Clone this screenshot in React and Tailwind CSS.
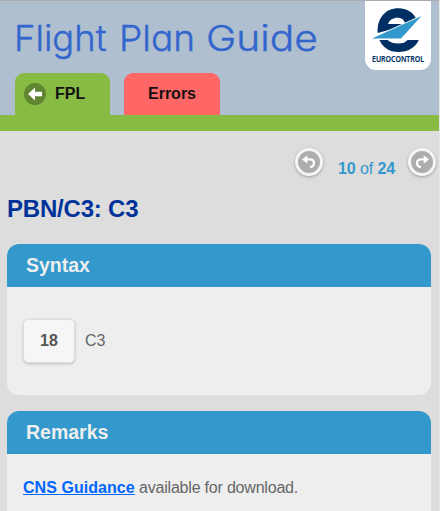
import React from 'react';

function Logo() {
  return (
    <div className="mt-px h-[69px] w-[66px] rounded-b-[11px] bg-white">
      <svg width="66" height="53" viewBox="365 1 66 53">
        <path
          d="M377.700 33C376.800 18.600 385 8.300 398.500 8.300C406.500 8.300 412.500 12 416.300 18.500L405 24C404.500 20 402 17.800 397.500 17.800C393 17.800 389.500 20 388 24H404L400 27Z"
          fill="#002f63"
        />
        <path
          d="M379.500 40L387.600 40C390 42.400 394 43.600 398.500 43.600C402.500 43.600 405.500 42.400 407.600 40L418.800 40C415.500 47.500 408 52 398.500 52C389.500 52 382.500 47.500 379.500 40Z"
          fill="#002f63"
        />
        <path d="M372 38.600L421.500 16L401 38.600Z" fill="#3399cc" stroke="#fff" strokeWidth="1.600" paintOrder="stroke" />
      </svg>
      <div className="origin-center scale-x-[0.87] text-center font-['Open_Sans',sans-serif] text-[8px] leading-[10px] font-semibold whitespace-nowrap text-[#002f63] [-webkit-text-stroke:0.200px_#002f63]">
        EUROCONTROL
      </div>
    </div>
  );
}

function RoundButton({ flip }) {
  return (
    <button className="flex size-[28px] items-center justify-center rounded-full border-[3px] border-[#f5f5f5] bg-[#adadad] shadow-[0_1px_3px_rgba(0,0,0,0.3)]">
      <svg
        width="22"
        height="22"
        viewBox="0 0 22 22"
        className={flip ? 'shrink-0 -scale-x-100' : 'shrink-0'}
      >
        <path d="M7 8.400H12C17 8.400 17.500 15.300 12 16.200" fill="none" stroke="#fff" strokeWidth="2.200" />
        <path d="M4 8.400L9.300 4.300V12.500Z" fill="#fff" />
      </svg>
    </button>
  );
}

function Card({ title, className, children }) {
  return (
    <section className={`overflow-hidden rounded-[12px] bg-[#eee] ${className}`}>
      <h2 className="flex h-[43px] items-center bg-[#3399cc] pl-[19px] text-[19.500px] font-bold text-[#eee]">
        {title}
      </h2>
      {children}
    </section>
  );
}

export default function App() {
  return (
    <main className="h-[511px] w-[440px] overflow-hidden border-r border-[#e6e6e6] bg-[#ddd] font-['Liberation_Sans',Arial,sans-serif]">
      <header className="flex h-[131px] flex-col border-t border-b-[16px] border-t-[#a9abb0] border-b-[#88bb44] bg-[#b0bfd0]">
        <div className="-mt-px flex h-[73px] shrink-0 justify-between pr-[8px] pl-[14px]">
          <h1 className="mt-[15px] flex font-['Inter',sans-serif] text-[36px] leading-[46px] font-light whitespace-nowrap text-[#3366cc] [-webkit-text-stroke:0.400px_#3366cc] [font-feature-settings:'cv11']">
            <span className="w-[105px] origin-left scale-x-[1.01]">Flight</span>
            <span className="w-[87px] origin-left scale-x-[1.03]">Plan</span>
            <span className="origin-left scale-x-[1.130]">Guide</span>
          </h1>
          <Logo />
        </div>
        <nav className="flex h-[42px] gap-[14px] pl-[15px] text-[16px] font-bold text-[#111]">
          <a className="flex w-[95px] items-center gap-[9px] rounded-t-[9px] bg-[#88bb44] pl-[9px]">
            <svg width="22" height="22" viewBox="0 0 22 22">
              <circle cx="11" cy="11" r="11" fill="#5f8530" />
              <path d="M4 11L11 4.500V8.700H18V13.300H11V17.500Z" fill="#fff" />
            </svg>
            FPL
          </a>
          <a className="flex w-[96px] items-center justify-center rounded-t-[9px] bg-[#ff6666]">Errors</a>
        </nav>
      </header>
      <div className="mt-[17px] flex h-[28px] justify-end pr-[3px] text-[16px] text-[#3399cc]">
        <RoundButton />
        <span className="mt-[9px] w-[85px] pl-[15px] leading-[24px] tracking-[-0.100px] whitespace-nowrap">
          <b>10</b> of <b>24</b>
        </span>
        <RoundButton flip />
      </div>
      <h1 className="mt-[18px] ml-[7px] text-[24px] leading-[30px] font-bold tracking-[-0.200px] text-[#003399]">
        PBN/C3: C3
      </h1>
      <div className="mt-[20px] mr-[8px] ml-[7px] flex flex-col gap-4">
        <Card title="Syntax" className="h-[151px]">
          <div className="mt-[32px] ml-[16px] flex items-center gap-[10px] text-[16px] text-[#666]">
            <b className="flex h-[44px] w-[52px] items-center justify-center rounded-[5px] border border-[#ddd] bg-[#f6f6f6] text-[#555] shadow-[0_1px_3px_rgba(0,0,0,0.2)]">
              18
            </b>
            C3
          </div>
        </Card>
        <Card title="Remarks" className="h-[160px]">
          <p className="mt-[22px] ml-[16px] text-[16px] leading-[24px] tracking-[-0.200px] text-[#666]">
            <a className="font-bold tracking-[0.050px] text-[#0066ff] underline">CNS Guidance</a> available for download.
          </p>
        </Card>
      </div>
    </main>
  );
}
